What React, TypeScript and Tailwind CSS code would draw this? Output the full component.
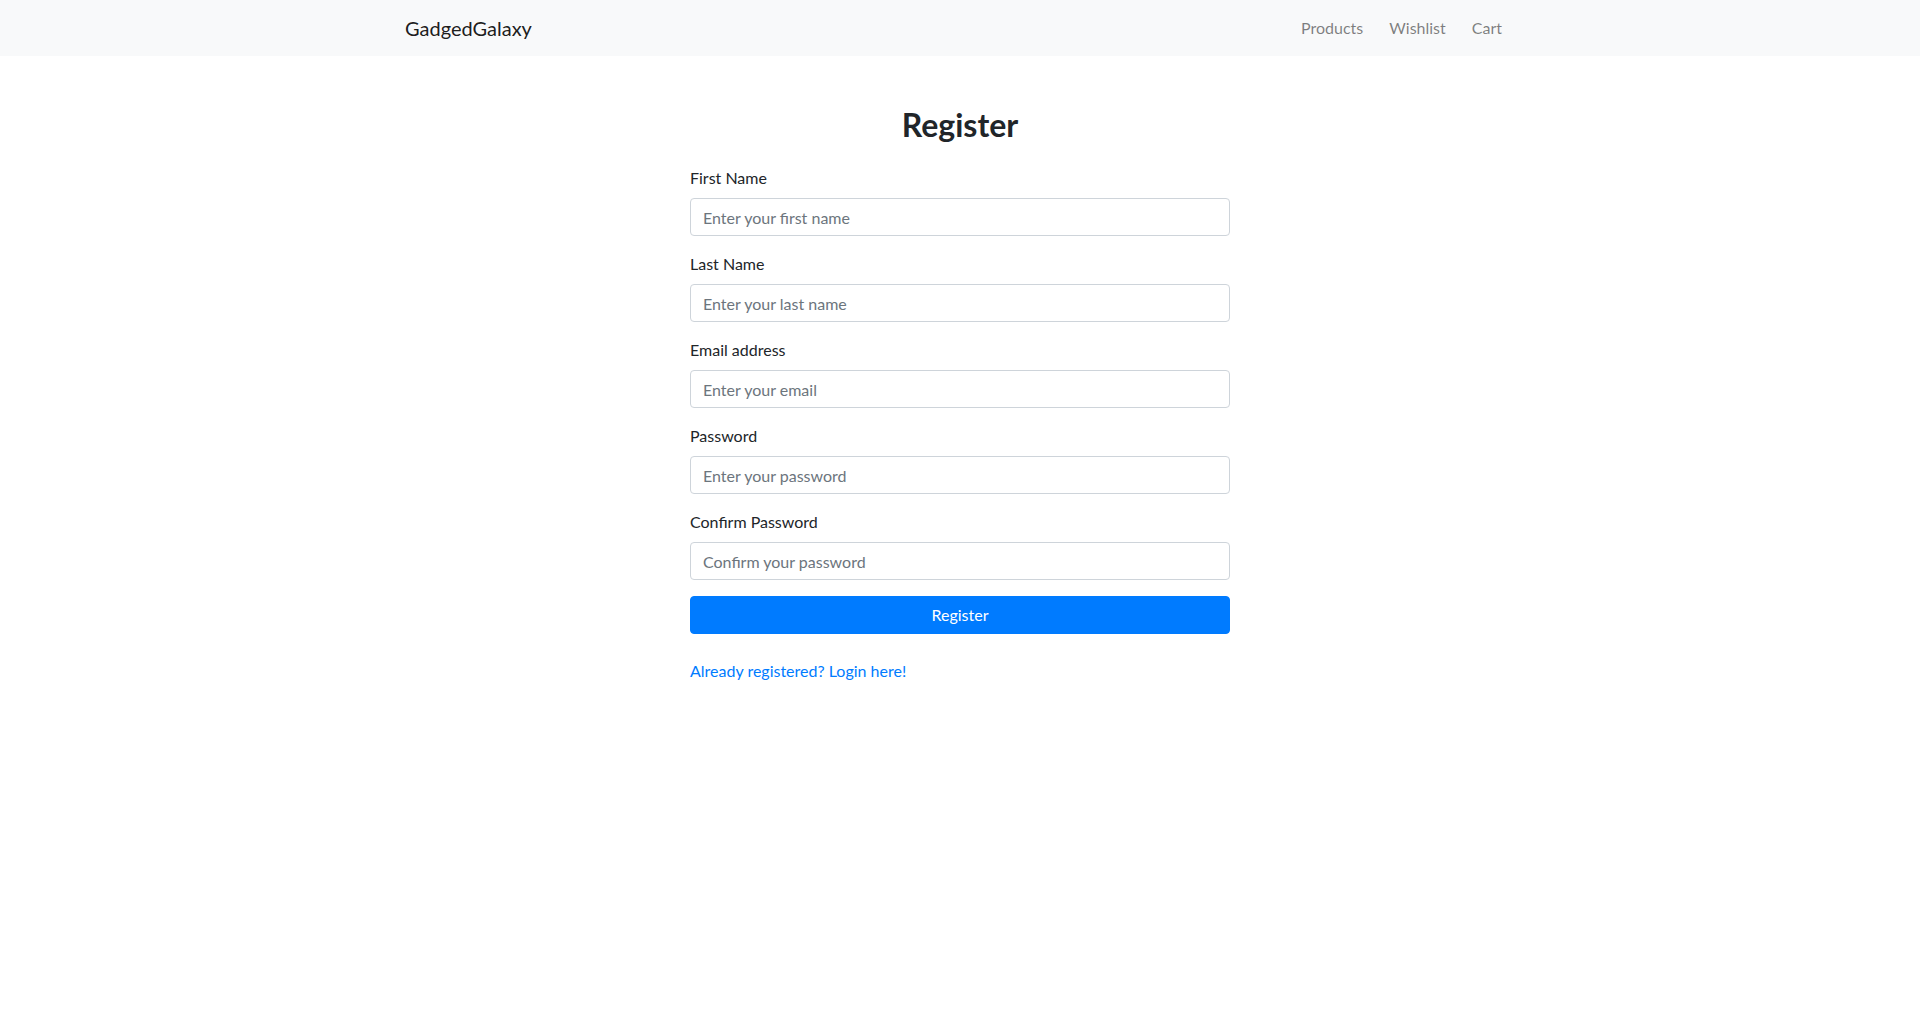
import React, { useState } from "react";

const fields = [
  { id: "firstName", label: "First Name", type: "text", placeholder: "Enter your first name" },
  { id: "lastName", label: "Last Name", type: "text", placeholder: "Enter your last name" },
  { id: "email", label: "Email address", type: "email", placeholder: "Enter your email" },
  { id: "password", label: "Password", type: "password", placeholder: "Enter your password" },
  { id: "confirmPassword", label: "Confirm Password", type: "password", placeholder: "Confirm your password" },
];

const Navbar = () => (
  <nav className="bg-[#f8f9fa] px-4 py-2">
    <div className="mx-auto flex max-w-[1140px] items-center justify-between px-[15px]">
      <a href="#" className="py-[5px] text-[20px] leading-[30px] text-black/90">
        GadgedGalaxy
      </a>
      <ul className="flex">
        {["Products", "Wishlist", "Cart"].map((link) => (
          <li key={link}>
            <a href="#" className="block px-[13px] py-2 text-[16px] leading-6 text-black/50 hover:text-black/70">
              {link}
            </a>
          </li>
        ))}
      </ul>
    </div>
  </nav>
);

export default function App() {
  const [values, setValues] = useState<Record<string, string>>({});

  return (
    <div className="min-h-screen bg-white text-[16px] leading-6 text-[#212529] font-['Lato','Liberation_Sans',sans-serif]">
      <Navbar />
      <div className="mx-auto mt-[50px] max-w-[1140px] px-[15px]">
        <div className="mx-auto w-[540px]">
          <h2 className="mb-[22px] text-center text-[32px] font-bold leading-[38px]">Register</h2>
          <form onSubmit={(e) => e.preventDefault()}>
            {fields.map((f) => (
              <div key={f.id} className="mb-4">
                <label htmlFor={f.id} className="mb-2 block">
                  {f.label}
                </label>
                <input
                  id={f.id}
                  type={f.type}
                  placeholder={f.placeholder}
                  value={values[f.id] ?? ""}
                  onChange={(e) => setValues({ ...values, [f.id]: e.target.value })}
                  className="block h-[38px] w-full rounded border border-[#ced4da] bg-white px-3 py-1.5 text-[16px] text-[#495057] placeholder:text-[#6c757d] focus:border-[#80bdff] focus:outline-none"
                />
              </div>
            ))}
            <button
              type="submit"
              className="block h-[38px] w-full rounded border border-[#007bff] bg-[#007bff] text-[16px] text-white hover:bg-[#0069d9]"
            >
              Register
            </button>
          </form>
          <p className="mt-[25px]">
            <a href="#" className="text-[#007bff] hover:underline">
              Already registered? Login here!
            </a>
          </p>
        </div>
      </div>
    </div>
  );
}
